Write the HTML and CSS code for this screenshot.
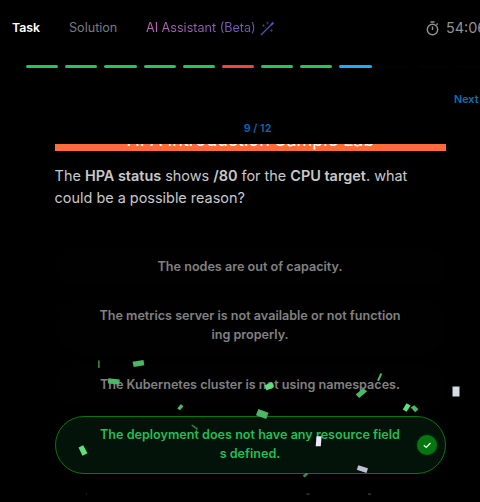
FILE: index.html
```html
<!DOCTYPE html>
<html lang="en">
<head>
<meta charset="utf-8">
<title>Task</title>
<link rel="stylesheet" href="styles.css">
</head>
<body>
<header class="tabs">
  <span class="tab active">Task</span>
  <span class="tab solution">Solution</span>
  <span class="tab assistant"><span class="assistant-label">AI Assistant (Beta)</span>
    <svg class="wand" viewBox="0 0 15 15" fill="none" stroke="#5751b5" stroke-width="1.3"><path d="M1 14 11.500 3.500"/><path d="M11 4 13.500 1.500" stroke-width="1.800"/><path d="M2 4.500h3M3.500 3v3M6 2h3M7.500 .7v2.600M10 9.500h3M11.500 8v3M5 6l1 1" stroke-width=".9" opacity=".55"/></svg>
  </span>
  <span class="timer">
    <svg class="clock" viewBox="0 0 14 15" fill="none" stroke="#929292" stroke-width="1.4"><circle cx="6.500" cy="8.500" r="5.200"/><path d="M4.500 1h4M6.500 5.500v3.500M10.500 3.700l1.200-1.200"/></svg>
    <span>54:06</span>
  </span>
</header>
<div class="progress">
  <i class="ok"></i><i class="ok"></i><i class="ok"></i><i class="ok"></i><i class="ok"></i><i class="bad"></i><i class="ok"></i><i class="ok"></i><i class="current"></i><i></i><i></i><i></i>
</div>
<div class="next">Next</div>
<main class="question">
  <div class="count">9 / 12</div>
  <div class="banner"><span>HPA Introduction Sample Lab</span></div>
  <p class="prompt">The <b>HPA status</b> shows <b>/80</b> for the <b>CPU target</b>. what<br>could be a possible reason?</p>
  <div class="options">
    <div class="option"><span>The nodes are out of capacity.</span></div>
    <div class="option"><span>The metrics server is not available or not function<br>ing properly.</span></div>
    <div class="option"><span>The Kubernetes cluster is not using namespaces.</span></div>
    <div class="option correct"><span>The deployment does not have any resource field<br>s defined.</span>
      <div class="check"><svg viewBox="0 0 20 20" fill="none" stroke="#e8ffe8" stroke-width="1.2"><path d="M6.800 10.300 9.200 12.500 13.500 8"/></svg></div>
    </div>
  </div>
</main>
<svg class="confetti" viewBox="0 0 480 502">
  <g fill="#4cb765">
    <rect x="98.300" y="360.500" width="1.200" height="7.500"/>
    <path d="M132.500 361.800 143.500 360 144.300 365.300 133.700 367z"/>
    <path d="M108.300 378.200 119.800 379.500 119.300 384.700 107.800 383.200z"/>
    <path d="M177.200 408.500 180.700 404.300 183.500 406.200 180 410.300z"/>
    <path d="M258.300 409 268.500 412.800 266.200 419 256 415.200z"/>
    <path d="M191.300 425.500 192.200 424.400 198 428.500 197 430z" opacity=".65"/>
    <path d="M380.300 373.200 382.300 373.700 379 381 377 380.500z"/>
    <path d="M355.700 394.500 363 388.200 367.200 391.300 359.200 398z"/>
    <path d="M410.700 407.500 414.300 405.200 418.500 409.200 415.200 412.200z"/>
    <path d="M302.700 475.500 306.500 473 308.300 474 304.700 477.500z" opacity=".8"/>
    <rect x="86" y="493.500" width="1" height="1" opacity=".4"/>
  </g>
  <g fill="#5fe07e">
    <path d="M78.500 447.500 83.200 445.300 87.500 453.200 82.500 455.800z"/>
    <path d="M264.500 385.500 272 382.300 273.800 387 266.500 390.500z"/>
    <path d="M402.800 409.500 406.500 403.300 410.700 405.500 406.500 411.700z"/>
  </g>
  <path fill="#d4dde2" d="M452.500 386.500H459.500V396.500H452.500z"/>
  <path fill="#eee8fb" d="M316.500 436.300H321.600L320.800 446.200H315.700z"/>
  <path fill="#c2bed3" d="M358.300 465.200 368 468.300 366.500 473 356.800 469.800z"/>
  <g fill="#55525c"><rect x="306.500" y="493.600" width="3" height="1"/><rect x="368" y="493.600" width="3" height="1"/></g>
</svg>
</body>
</html>
```
FILE: styles.css
```css
* { box-sizing: border-box; }
body {
  margin: 0;
  width: 480px;
  height: 502px;
  overflow: hidden;
  background: #000;
  font-family: Inter, sans-serif;
  color: #c9c9c9;
}
.tabs {
  height: 56px;
  padding-left: 12px;
  display: flex;
  align-items: center;
  font-size: 12.600px;
  line-height: 16px;
  white-space: nowrap;
}
.tabs > * { flex: none; }
.tab.active { width: 57px; color: #fff; font-weight: 600; font-size: 12.300px; }
.tab.solution { width: 77px; color: #777b80; }
.assistant { display: flex; align-items: center; width: 280px; }
.assistant-label {
  background: linear-gradient(90deg, #bd65b5, #6858b5);
  -webkit-background-clip: text;
  background-clip: text;
  color: transparent;
}
.wand { width: 15px; height: 15px; margin-left: 4px; }
.timer { display: flex; align-items: center; gap: 6px; font-size: 14.400px; color: #929292; }
.clock { width: 14px; height: 15px; flex: none; }
.progress {
  width: 463px;
  height: 3px;
  margin: 9px 0 0 26px;
  display: grid;
  grid-template-columns: repeat(12, 1fr);
  gap: 7px;
}
.progress i { background: #020202; border-radius: 2px; }
.progress .ok { background: #27c45d; }
.progress .bad { background: #ee4545; }
.progress .current { background: #1eaaff; }
.next {
  margin: 24px 0 0 454px;
  font-size: 10.800px;
  line-height: 16px;
  font-weight: 600;
  color: #0870b8;
}
.question { width: 391px; margin: 13px 0 0 55px; }
.count {
  height: 23px;
  padding-left: 14px;
  text-align: center;
  font-size: 10.800px;
  line-height: 16px;
  font-weight: 600;
  color: #0867b4;
}
.banner {
  height: 7px;
  overflow: hidden;
  background: #ff6b3b;
  display: flex;
  align-items: flex-end;
  justify-content: center;
}
.banner span {
  flex: none;
  font-size: 18px;
  line-height: 22px;
  color: #fff;
  white-space: nowrap;
}
.prompt {
  margin: 14px 0 39px -.4px;
  font-size: 14.430px;
  line-height: 22px;
  white-space: nowrap;
}
.prompt b { font-weight: 600; }
.options { display: flex; flex-direction: column; gap: 11.200px; }
.option {
  position: relative;
  padding: 7.800px 1px 9.700px 0;
  border: 1px solid transparent;
  border-radius: 29px;
  background: #010101;
  text-align: center;
  font-size: 12.600px;
  line-height: 19px;
  font-weight: 600;
  color: #818181;
  white-space: nowrap;
}
.option.correct { background: #03130a; border-color: #087510; color: #22bd57; }
.check {
  position: absolute;
  right: 8px;
  top: 18px;
  width: 20px;
  height: 20px;
  border-radius: 50%;
  background: #067512;
  box-shadow: 0 0 3px #06751280;
}
.check svg { display: block; }
.confetti { position: absolute; left: 0; top: 0; width: 480px; height: 502px; pointer-events: none; }
```
